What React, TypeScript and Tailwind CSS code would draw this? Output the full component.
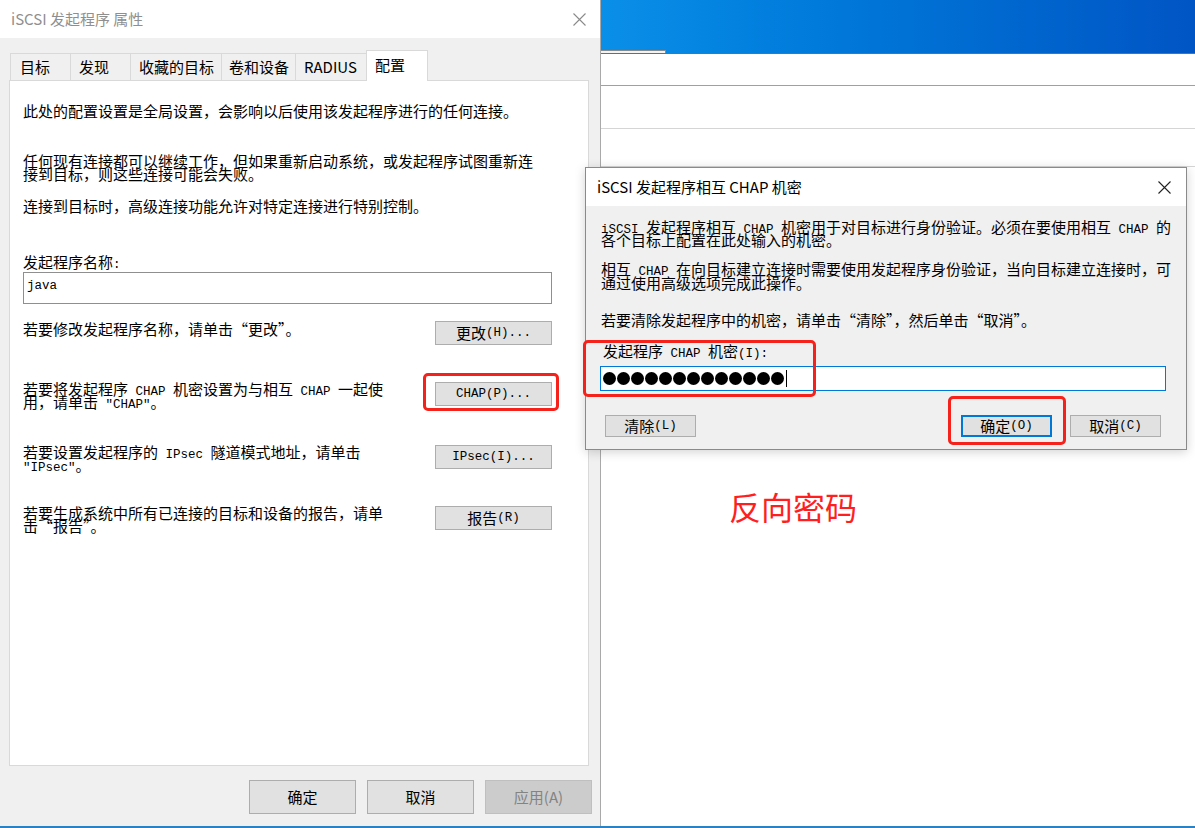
import React from "react";

function T({ s }: { s: string }) {
  const parts = s.split(/([\x20-\x7e]+)/).filter((p) => p.length > 0);
  return (
    <>
      {parts.map((p, i) =>
        /^[\x20-\x7e]+$/.test(p) ? (
          <span key={i} className="[font-family:'Liberation_Mono',monospace] text-[12.5px] leading-none">
            {p}
          </span>
        ) : (
          <span key={i}>{p}</span>
        )
      )}
    </>
  );
}

function XIcon({ color }: { color: string }) {
  return (
    <svg width="13" height="13" viewBox="0 0 13 13">
      <path d="M0.5 0.5 L12.5 12.5 M12.5 0.5 L0.5 12.5" stroke={color} strokeWidth="1.1" fill="none" />
    </svg>
  );
}

function SideBtn({ label }: { label: string }) {
  return (
    <div className="h-[24px] w-[117px] shrink-0 bg-[#e1e1e1] border border-[#adadad] flex items-center justify-center text-[15px] leading-[16px] whitespace-pre">
      <T s={label} />
    </div>
  );
}

export default function App() {
  return (
    <div className="w-[1195px] h-[828px] relative overflow-hidden bg-white text-black [font-family:'Noto_Sans_CJK_SC',sans-serif] flex flex-col">
      <div className="h-[826px] flex">
        {/* Left dialog */}
        <div className="w-[601px] h-full shrink-0 bg-[#f0f0f0] border-r border-[#a9a9a9] flex flex-col">
          <div className="h-[38px] bg-white flex items-center justify-between pl-[11px] pr-[14px]">
            <span className="text-[15px] leading-[20px] text-[#8f8f8f]">iSCSI 发起程序 属性</span>
            <XIcon color="#8a8a8a" />
          </div>
          <div className="mt-[12px] ml-[10px] h-[31px] flex items-end text-[15px] leading-[18px]">
            <div className="w-[60px] h-[27px] mb-[1px] border-t border-l border-[#d9d9d9] bg-[#f0f0f0] flex items-center pl-[9px]">目标</div>
            <div className="w-[60px] h-[27px] mb-[1px] border-t border-l border-[#d9d9d9] bg-[#f0f0f0] flex items-center pl-[8px]">发现</div>
            <div className="w-[91px] h-[27px] mb-[1px] border-t border-l border-[#d9d9d9] bg-[#f0f0f0] flex items-center pl-[8px]">收藏的目标</div>
            <div className="w-[74px] h-[27px] mb-[1px] border-t border-l border-[#d9d9d9] bg-[#f0f0f0] flex items-center pl-[7px]">卷和设备</div>
            <div className="w-[71px] h-[27px] mb-[1px] border-t border-l border-[#d9d9d9] bg-[#f0f0f0] flex items-center pl-[8px]">RADIUS</div>
            <div className="relative z-10 w-[62px] h-[31px] bg-white border-t border-l border-r border-[#d9d9d9] flex items-center pl-[8px] pb-[2px]">配置</div>
          </div>
          <div className="-mt-[1px] ml-[9px] w-[580px] h-[686px] bg-white border border-[#d9d9d9] pl-[13px] flex flex-col text-[15px] whitespace-pre">
            <div className="mt-[22px] h-[16px] leading-[16px]">
              <T s="此处的配置设置是全局设置，会影响以后使用该发起程序进行的任何连接。" />
            </div>
            <div className="mt-[35px] leading-[13px]">
              <div className="h-[13px]"><T s="任何现有连接都可以继续工作，但如果重新启动系统，或发起程序试图重新连" /></div>
              <div className="h-[13px]"><T s="接到目标，则这些连接可能会失败。" /></div>
            </div>
            <div className="mt-[18px] h-[16px] leading-[16px]">
              <T s="连接到目标时，高级连接功能允许对特定连接进行特别控制。" />
            </div>
            <div className="mt-[40px] h-[16px] leading-[16px]">
              <T s="发起程序名称:" />
            </div>
            <div className="mt-[2px] w-[529px] h-[32px] shrink-0 bg-white border border-[#8f8f8f] pl-[3px] pt-[2px] leading-[16px]">
              <T s="java" />
            </div>
            <div className="mt-[17px] h-[24px] flex items-start">
              <div className="w-[412px] h-[16px] leading-[16px]"><T s="若要修改发起程序名称，请单击“更改”。" /></div>
              <SideBtn label="更改(H)..." />
            </div>
            <div className="mt-[37px] h-[27px] flex items-start">
              <div className="w-[412px] leading-[13px]">
                <div className="h-[13px]"><T s="若要将发起程序 CHAP 机密设置为与相互 CHAP 一起使" /></div>
                <div className="h-[13px]"><T s={'用，请单击 "CHAP"。'} /></div>
              </div>
              <SideBtn label="CHAP(P)..." />
            </div>
            <div className="mt-[36px] h-[26px] flex items-start">
              <div className="w-[412px] leading-[13px]">
                <div className="h-[13px]"><T s="若要设置发起程序的 IPsec 隧道模式地址，请单击" /></div>
                <div className="h-[13px]"><T s={'"IPsec"。'} /></div>
              </div>
              <SideBtn label="IPsec(I)..." />
            </div>
            <div className="mt-[35px] h-[26px] flex items-start">
              <div className="w-[412px] leading-[13px]">
                <div className="h-[13px]"><T s="若要生成系统中所有已连接的目标和设备的报告，请单" /></div>
                <div className="h-[13px]"><T s="击“报告”。" /></div>
              </div>
              <SideBtn label="报告(R)" />
            </div>
          </div>
          <div className="mt-[14px] pr-[8px] flex justify-end gap-[11px] text-[15px] leading-[18px]">
            <div className="w-[107px] h-[34px] border border-[#adadad] bg-[#e1e1e1] flex items-center justify-center">确定</div>
            <div className="w-[107px] h-[34px] border border-[#adadad] bg-[#e1e1e1] flex items-center justify-center">取消</div>
            <div className="w-[107px] h-[34px] border border-[#bfbfbf] bg-[#cccccc] text-[#838383] flex items-center justify-center">应用(A)</div>
          </div>
        </div>

        {/* Background window */}
        <div className="flex-1 flex flex-col bg-white">
          <div className="h-[54px] bg-linear-to-r from-[#0a8fe8] to-[#0055c4] border-b border-[#5f6f85] flex items-end">
            <div className="w-[65px] h-[3px] bg-[#f3f3f3] border-t border-r border-[#8a8a8a]" />
          </div>
          <div className="h-[32px] border-b border-[#a0a0a0]" />
          <div className="h-[43px] border-b border-[#d5d5d5]" />
          <div className="h-[38px] border-b border-[#d5d5d5]" />
          <div className="flex-1" />
        </div>
      </div>
      <div className="h-[2px] bg-[#2a82c4]" />

      {/* CHAP secret dialog */}
      <div className="absolute left-[585px] top-[167px] w-[602px] h-[283px] border border-[#8a8a8a] shadow-[0_2px_10px_rgba(0,0,0,0.18)] flex flex-col bg-[#f0f0f0]">
        <div className="h-[38px] shrink-0 bg-white flex items-center justify-between pl-[11px] pr-[15px]">
          <span className="text-[15px] leading-[20px]">iSCSI 发起程序相互 CHAP 机密</span>
          <XIcon color="#222222" />
        </div>
        <div className="flex-1 pl-[15px] flex flex-col text-[15px] whitespace-pre">
          <div className="mt-[14px] leading-[13px]">
            <div className="h-[13px]"><T s="iSCSI 发起程序相互 CHAP 机密用于对目标进行身份验证。必须在要使用相互 CHAP 的" /></div>
            <div className="h-[13px]"><T s="各个目标上配置在此处输入的机密。" /></div>
          </div>
          <div className="mt-[16px] leading-[14px]">
            <div className="h-[14px]"><T s="相互 CHAP 在向目标建立连接时需要使用发起程序身份验证，当向目标建立连接时，可" /></div>
            <div className="h-[14px]"><T s="通过使用高级选项完成此操作。" /></div>
          </div>
          <div className="mt-[22px] h-[16px] leading-[16px]">
            <T s="若要清除发起程序中的机密，请单击“清除”，然后单击“取消”。" />
          </div>
          <div className="mt-[15px] h-[16px] pl-[2px] leading-[16px]">
            <T s="发起程序 CHAP 机密(I):" />
          </div>
          <div className="mt-[7px] -ml-[1px] w-[566px] h-[25px] shrink-0 bg-white border border-[#0078d7] flex items-center pl-[2px] gap-[1px]">
            {Array.from({ length: 13 }).map((_, i) => (
              <span key={i} className="w-[13px] h-[13px] rounded-full bg-black shrink-0" />
            ))}
            <span className="w-[1px] h-[17px] bg-black ml-[1px]" />
          </div>
          <div className="mt-[24px] mr-[25px] flex items-center leading-[16px]">
            <div className="ml-[4px] w-[91px] h-[22px] bg-[#e1e1e1] border border-[#adadad] flex items-center justify-center"><T s="清除(L)" /></div>
            <div className="flex-1" />
            <div className="w-[91px] h-[22px] bg-[#e1e1e1] border-2 border-[#0078d7] flex items-center justify-center"><T s="确定(O)" /></div>
            <div className="ml-[18px] w-[91px] h-[22px] bg-[#e1e1e1] border border-[#adadad] flex items-center justify-center"><T s="取消(C)" /></div>
          </div>
        </div>
      </div>

      {/* Annotations */}
      <div className="absolute left-[423px] top-[373px] w-[136px] h-[38px] border-[3px] border-[#f5221b] rounded-[5px]" />
      <div className="absolute left-[583px] top-[340px] w-[233px] h-[57px] border-[3px] border-[#f5221b] rounded-[5px]" />
      <div className="absolute left-[948px] top-[396px] w-[118px] h-[49px] border-[3px] border-[#f5221b] rounded-[5px]" />
      <div className="absolute left-[729px] top-[490px] text-[32px] leading-[32px] text-[#ff1f1f]">反向密码</div>
    </div>
  );
}
